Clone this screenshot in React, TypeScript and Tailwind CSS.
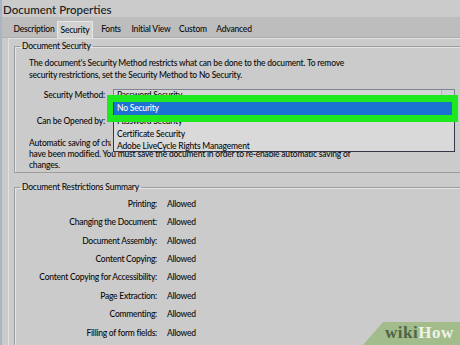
import React from 'react';

const restrictions = [
  'Printing:',
  'Changing the Document:',
  'Document Assembly:',
  'Content Copying:',
  'Content Copying for Accessibility:',
  'Page Extraction:',
  'Commenting:',
  'Filling of form fields:',
];

const tabs = [
  { label: 'Description', w: 'w-[46px]' },
  { label: 'Security', w: 'w-[36px]', active: true },
  { label: 'Fonts', w: 'w-[36px]' },
  { label: 'Initial View', w: 'w-[44px]' },
  { label: 'Custom', w: 'w-[40px]' },
  { label: 'Advanced', w: 'w-[42px]' },
];

function WikiHowMark() {
  return (
    <div className="absolute right-0 bottom-0 w-[97px] h-[23px]">
      <svg className="absolute inset-0" width="97" height="23" viewBox="0 0 97 23">
        <polygon points="20,0 97,0 97,23 0,23" fill="#a2bc8b" />
      </svg>
      <div className="absolute left-[22px] top-[1px] font-['Liberation_Serif',serif] font-bold text-[17px] leading-[20px] tracking-[0.5px]">
        <span className="text-[#4f6448]">wiki</span>
        <span className="text-[#eef3e6]">How</span>
      </div>
    </div>
  );
}

export default function App() {
  return (
    <div className="relative w-[460px] h-[345px] overflow-hidden bg-[#cbcbcb] border-l-2 border-[#a9b4c5] font-['Lato',sans-serif] font-medium text-[#0a0a0a] flex flex-col">
      <div className="shrink-0 h-[17px] pl-[1px] text-[11.5px] leading-[19px] text-[#1a1a1a]">Document Properties</div>

      <div className="shrink-0 h-[21px] bg-[#bdbdbd] flex items-end pl-[9px] border-b border-[#adadad] tracking-[-0.2px]">
        {tabs.map((t) => (
          <div
            key={t.label}
            className={
              t.active
                ? `${t.w} h-[17px] -mb-px pt-[1px] bg-[#d2d2d2] border-t border-x border-[#e6e6e6] flex items-center justify-center text-[8.5px] whitespace-nowrap`
                : `${t.w} h-[15px] flex items-center justify-center text-[8.5px] whitespace-nowrap`
            }
          >
            {t.label}
          </div>
        ))}
      </div>

      <div className="flex-1 min-h-0 ml-[6px] border-l border-t border-[#e2e2e2] pl-[5px] pt-[2px] text-[8.5px] tracking-[-0.2px]">
        <fieldset className="w-[470px] h-[132px] border-l border-t border-b border-[#9d9d9d] shadow-[inset_1px_1px_0_#e4e4e4]">
          <legend className="ml-[5px] px-[2px] leading-[11px]">Document Security</legend>
          <div className="pl-[14px] mt-[5px] leading-[12px] w-[440px]">
            The document's Security Method restricts what can be done to the document. To remove
            <br />
            security restrictions, set the Security Method to No Security.
          </div>
          <div className="flex items-center mt-[8px] h-[13px]">
            <div className="w-[90px] text-right">Security Method:</div>
            <div className="ml-[8px] w-[342px] h-[13px] border border-[#7d8594] bg-[#d6d6d6] flex items-center justify-between pl-[3px]">
              <span>Password Security</span>
              <span className="w-[13px] h-full bg-[#cdd0d5] border-l border-[#b0b4bb] flex items-center justify-center text-[8px] text-[#333]">v</span>
            </div>
          </div>
          <div className="flex items-center mt-[13px] h-[13px]">
            <div className="w-[90px] text-right">Can be Opened by:</div>
          </div>
          <div className="pl-[14px] mt-[10px] leading-[11px] w-[440px]">
            <div className="w-[82px] overflow-hidden whitespace-nowrap">Automatic saving of changes</div>
            <div>have been modified. You must save the document in order to re-enable automatic saving of</div>
            <div>changes.</div>
          </div>
        </fieldset>

        <fieldset className="mt-[9px] w-[470px] h-[200px] border-l border-t border-[#9d9d9d] shadow-[inset_1px_1px_0_#e4e4e4]">
          <legend className="ml-[5px] px-[2px] leading-[11px]">Document Restrictions Summary</legend>
          <div className="mt-[2px] flex flex-col tracking-[-0.25px]">
            {restrictions.map((r) => (
              <div key={r} className="flex h-[18.4px] items-center">
                <div className="w-[142px] text-right whitespace-nowrap">{r}</div>
                <div className="ml-[10px]">Allowed</div>
              </div>
            ))}
          </div>
        </fieldset>
      </div>

      {/* open dropdown list */}
      <div className="absolute left-[111px] top-[101px] w-[342px] h-[51px] bg-[#d9d9d9] border border-[#34384a] text-[8.5px] tracking-[-0.2px] flex flex-col">
        <div className="h-[13px] bg-[#1c72d3] text-white pl-[3px] leading-[13px]">No Security</div>
        <div className="h-[12.5px] pl-[3px] leading-[12.5px]">Password Security</div>
        <div className="h-[12px] pl-[3px] leading-[12px]">Certificate Security</div>
        <div className="h-[12px] pl-[3px] leading-[12px]">Adobe LiveCycle Rights Management</div>
      </div>

      {/* highlight */}
      <div className="absolute left-[105px] top-[95px] w-[351px] h-[27px] border-x-[6px] border-y-[7px] border-[#1ee81e]" />

      <WikiHowMark />
    </div>
  );
}
